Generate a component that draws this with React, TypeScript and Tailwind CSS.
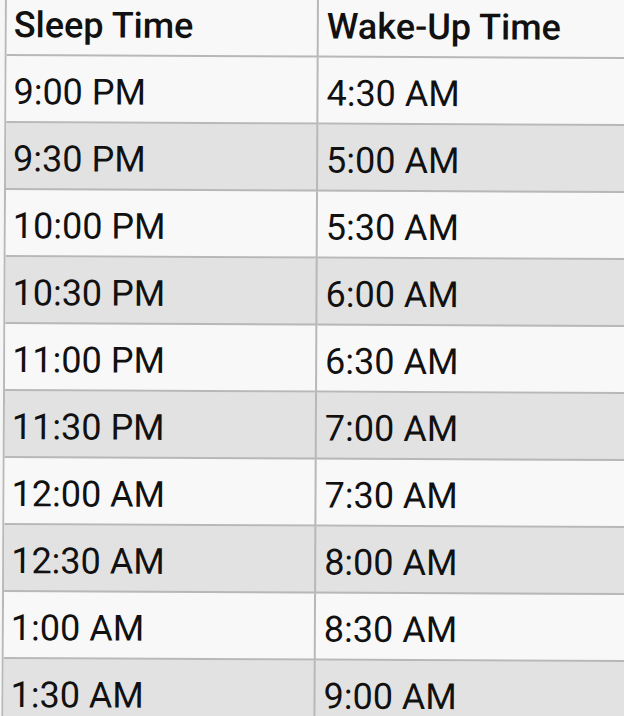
import React from "react";

const rows: [string, string][] = [
  ["9:00 PM", "4:30 AM"],
  ["9:30 PM", "5:00 AM"],
  ["10:00 PM", "5:30 AM"],
  ["10:30 PM", "6:00 AM"],
  ["11:00 PM", "6:30 AM"],
  ["11:30 PM", "7:00 AM"],
  ["12:00 AM", "7:30 AM"],
  ["12:30 AM", "8:00 AM"],
  ["1:00 AM", "8:30 AM"],
  ["1:30 AM", "9:00 AM"],
];

export default function App() {
  return (
    <div
      className="w-[624px] h-[716px] overflow-hidden bg-[#f6f6f6] text-[#111111]"
      style={{ fontFamily: "Roboto, 'Noto Sans', sans-serif" }}
    >
      <div className="-mt-[11px] ml-[5px] w-[660px] origin-top-left rotate-[0.28deg] border-l-2 border-[#b8b8b8]">
        <div className="grid grid-cols-[312px_1fr] bg-[#f8f8f8]">
          <div className="h-[67px] flex items-center pl-[7px] pt-[7px] border-r-2 border-b-2 border-[#b8b8b8] text-[36px] font-medium">
            Sleep Time
          </div>
          <div className="h-[67px] flex items-center pl-[8px] pt-[7px] border-b-2 border-[#b8b8b8] text-[36px] font-medium">
            Wake-Up Time
          </div>
        </div>
        {rows.map(([s, w], i) => (
          <div
            key={s}
            className={`grid grid-cols-[312px_1fr] ${i % 2 === 1 ? "bg-[#e2e2e2]" : "bg-[#f8f8f8]"}`}
          >
            <div className="h-[67px] flex items-center pl-[7px] pt-[7px] border-r-2 border-b-2 border-[#b8b8b8] text-[36px]">
              {s}
            </div>
            <div className="h-[67px] flex items-center pl-[8px] pt-[7px] border-b-2 border-[#b8b8b8] text-[36px]">
              {w}
            </div>
          </div>
        ))}
      </div>
    </div>
  );
}
